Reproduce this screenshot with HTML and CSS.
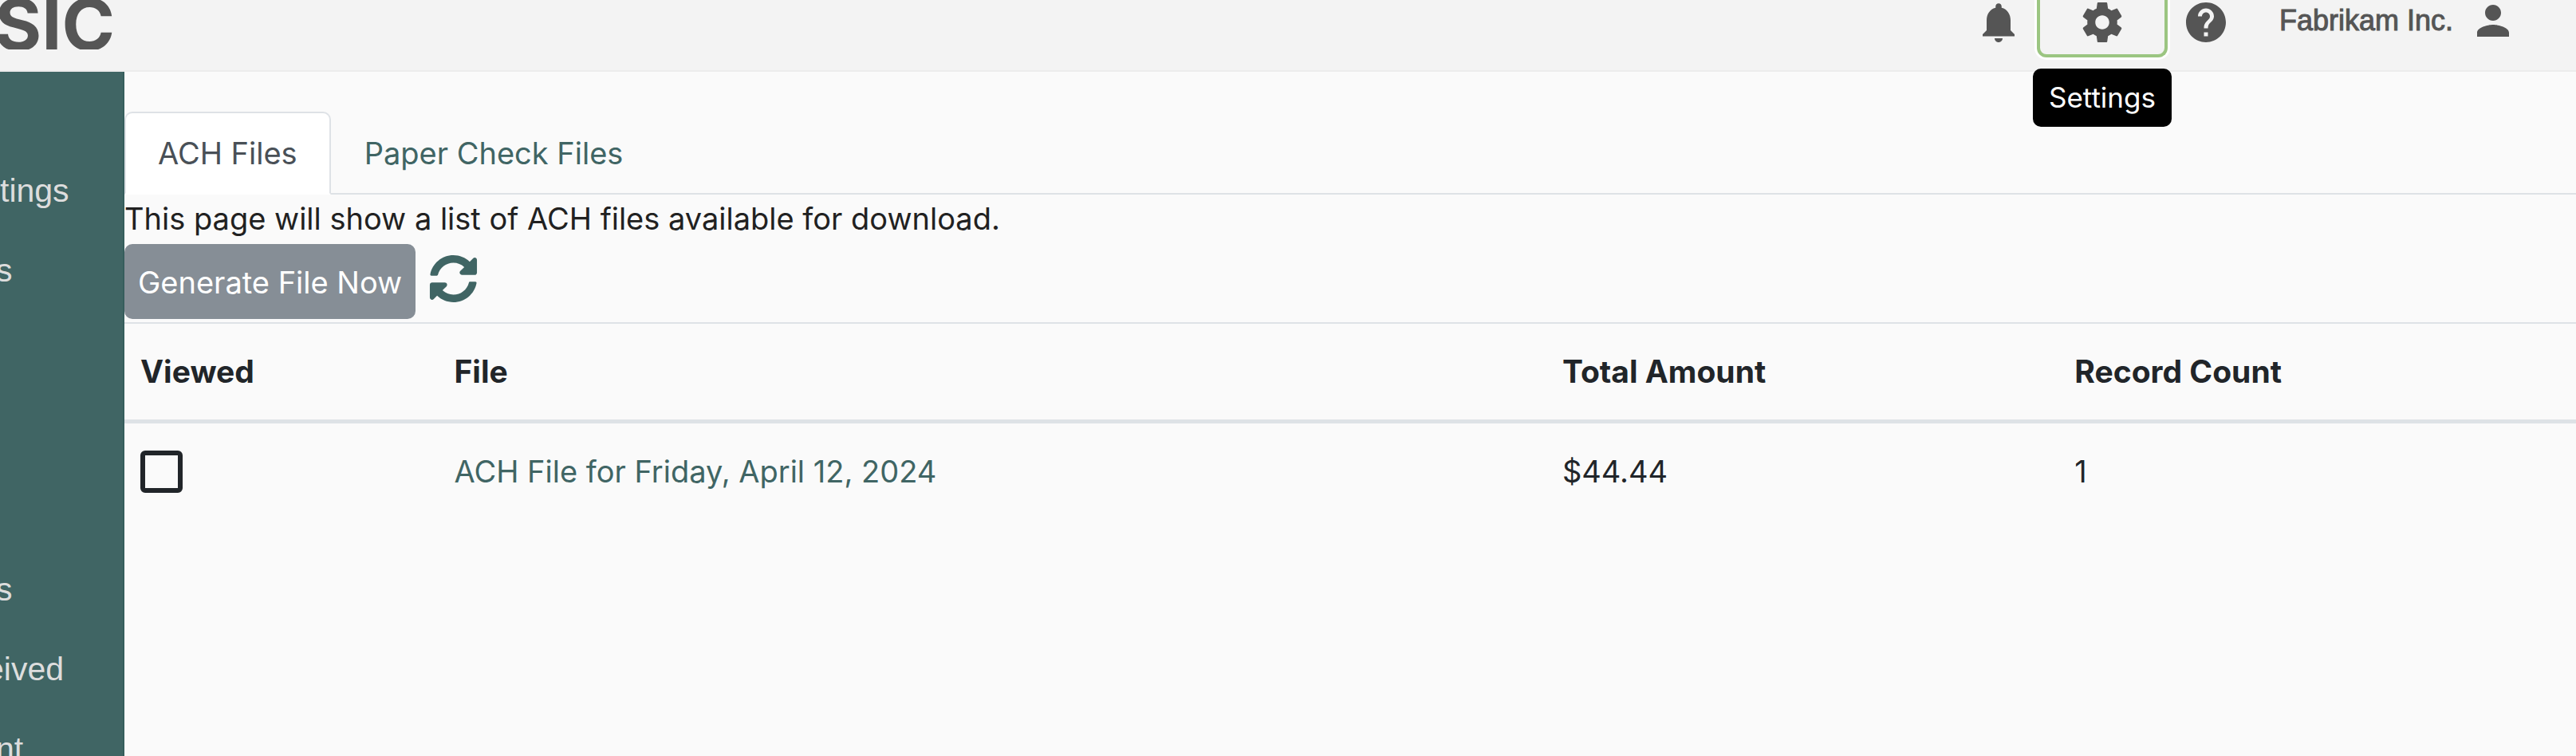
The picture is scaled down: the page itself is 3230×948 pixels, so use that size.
FILE: index.html
```html
<!DOCTYPE html>
<html lang="en">
<head>
<meta charset="utf-8">
<title>ACH Files</title>
<link rel="stylesheet" href="styles.css">
</head>
<body>
<header class="topbar">
  <div class="brand">SIC</div>
  <div class="actions">
    <button class="icon-btn" type="button" aria-label="Notifications">
      <svg class="icon" viewBox="0 0 24 24"><path d="M12 22c1.1 0 2-.9 2-2h-4c0 1.1.89 2 2 2zm6-6v-5c0-3.07-1.64-5.64-4.5-6.32V4c0-.83-.67-1.500-1.500-1.500s-1.500.67-1.500 1.500v.68C7.630 5.360 6 7.920 6 11v5l-2 2v1h16v-1l-2-2z"/></svg>
    </button>
    <div class="tip-host">
      <button class="icon-btn is-focused" type="button" aria-label="Settings" aria-describedby="settings-tip">
        <svg class="icon" viewBox="0 0 24 24"><path d="M19.430 12.980c.04-.32.07-.64.07-.98s-.03-.66-.07-.98l2.110-1.650c.19-.15.24-.42.12-.64l-2-3.460c-.12-.22-.39-.3-.61-.22l-2.490 1c-.52-.4-1.080-.73-1.690-.98l-.38-2.650C14.460 2.180 14.250 2 14 2h-4c-.25 0-.46.18-.49.42l-.38 2.650c-.61.25-1.170.59-1.690.98l-2.490-1c-.23-.09-.49 0-.61.22l-2 3.460c-.13.22-.07.49.12.64l2.110 1.650c-.04.32-.07.65-.07.98s.03.66.07.98l-2.110 1.650c-.19.15-.24.42-.12.64l2 3.460c.12.22.39.3.61.22l2.490-1c.52.4 1.080.73 1.690.98l.38 2.650c.03.24.24.42.49.42h4c.25 0 .46-.18.49-.42l.38-2.650c.61-.25 1.170-.59 1.690-.98l2.490 1c.23.09.49 0 .61-.22l2-3.460c.12-.22.07-.49-.12-.64l-2.110-1.650zM12 15.500c-1.930 0-3.500-1.570-3.500-3.500s1.570-3.500 3.500-3.500 3.500 1.570 3.500 3.500-1.570 3.500-3.500 3.500z"/></svg>
      </button>
      <span class="tooltip" role="tooltip" id="settings-tip">Settings</span>
    </div>
    <button class="icon-btn" type="button" aria-label="Help">
      <svg class="icon" viewBox="0 0 24 24"><path d="M12 2C6.480 2 2 6.480 2 12s4.480 10 10 10 10-4.480 10-10S17.520 2 12 2zm1 17h-2v-2h2v2zm2.070-7.750l-.9.92C13.450 12.900 13 13.500 13 15h-2v-.5c0-1.100.45-2.100 1.170-2.830l1.240-1.260c.37-.36.59-.86.59-1.410 0-1.100-.9-2-2-2s-2 .9-2 2H8c0-2.210 1.790-4 4-4s4 1.790 4 4c0 .88-.36 1.680-.93 2.250z"/></svg>
    </button>
    <button class="account" type="button">
      <span>Fabrikam Inc.</span>
      <svg class="icon" viewBox="0 0 24 24"><path d="M12 12c2.210 0 4-1.790 4-4s-1.790-4-4-4-4 1.790-4 4 1.790 4 4 4zm0 2c-2.670 0-8 1.340-8 4v2h16v-2c0-2.660-5.330-4-8-4z"/></svg>
    </button>
  </div>
</header>
<div class="shell">
  <nav class="sidebar" aria-label="Main">
    <a class="side-link" href="#">tings</a>
    <a class="side-link cut-s" href="#">s</a>
    <div class="side-gap"></div>
    <a class="side-link cut-s" href="#">s</a>
    <a class="side-link cut-l" href="#">eived</a>
    <a class="side-link cut-s" href="#">nt</a>
  </nav>
  <main class="content">
    <div class="tabs" role="tablist">
      <button class="tab is-active" role="tab" aria-selected="true" type="button">ACH Files</button>
      <button class="tab" role="tab" aria-selected="false" type="button">Paper Check Files</button>
    </div>
    <p class="intro">This page will show a list of ACH files available for download.</p>
    <div class="toolbar">
      <button class="generate" type="button">Generate File Now</button>
      <button class="refresh" type="button" aria-label="Refresh">
        <svg class="icon-sync" viewBox="0 0 512 512"><path d="M370.720 133.280C339.458 104.008 298.888 87.962 255.848 88c-77.458.068-144.328 53.178-162.791 126.850-1.344 5.363-6.122 9.150-11.651 9.150H24.103c-7.498 0-13.194-6.807-11.807-14.176C33.933 94.924 134.813 8 256 8c66.448 0 126.791 26.136 171.315 68.685L463.030 40.970C478.149 25.851 504 36.559 504 57.941V192c0 13.255-10.745 24-24 24H345.941c-21.382 0-32.090-25.851-16.971-40.971l41.750-41.749zM32 296h134.059c21.382 0 32.090 25.851 16.971 40.971l-41.750 41.750c31.262 29.273 71.835 45.319 114.876 45.280 77.418-.07 144.315-53.144 162.787-126.849 1.344-5.363 6.122-9.150 11.651-9.150h57.304c7.498 0 13.194 6.807 11.807 14.176C478.067 417.076 377.187 504 256 504c-66.448 0-126.791-26.136-171.315-68.685L48.970 471.030C33.851 486.149 8 475.441 8 454.059V320c0-13.255 10.745-24 24-24z"/></svg>
      </button>
    </div>
    <table class="files">
      <colgroup><col class="c-viewed"><col class="c-file"><col class="c-total"><col></colgroup>
      <thead>
        <tr><th scope="col">Viewed</th><th scope="col">File</th><th scope="col">Total Amount</th><th scope="col">Record Count</th></tr>
      </thead>
      <tbody>
        <tr>
          <td><input class="check" type="checkbox" aria-label="Viewed"></td>
          <td><a class="file-link" href="#">ACH File for Friday, April 12, 2024</a></td>
          <td>$44.44</td>
          <td>1</td>
        </tr>
      </tbody>
    </table>
  </main>
</div>
</body>
</html>
```
FILE: styles.css
```css
* { box-sizing: border-box; }

body {
  margin: 0;
  height: 100vh;
  display: flex;
  flex-direction: column;
  background: #fafafa;
  color: #212529;
  font: 38px/60px Inter, sans-serif;
  overflow: hidden;
}

button {
  margin: 0;
  padding: 0;
  border: 0;
  background: none;
  font: inherit;
  color: inherit;
}

a { text-decoration: none; }

/* Top bar */
.topbar {
  flex: none;
  height: 90px;
  display: flex;
  justify-content: space-between;
  align-items: flex-start;
  background: #f3f3f3;
  border-bottom: 2px solid #ececec;
  color: #555;
}

.brand {
  width: 144px;
  display: flex;
  justify-content: flex-end;
  overflow: hidden;
  font-size: 90px;
  font-weight: 700;
  line-height: 62px;
}

.actions {
  display: flex;
  align-items: flex-start;
  padding-right: 74px;
}

.icon {
  display: block;
  width: 60px;
  height: 60px;
  fill: #555;
}

.icon-btn {
  display: block;
  margin-top: -2px;
  padding: 0 8px;
}

.tip-host { position: relative; padding: 0 10px; }

.is-focused {
  padding: 0 48px 10px;
  border: 4px solid #9bc581;
  border-top: 0;
  border-radius: 0 0 12px 12px;
  box-shadow: 0 0 0 3px #fff;
}

.tooltip {
  position: absolute;
  top: 86px;
  left: 50%;
  transform: translateX(-50%);
  padding: 0 20px;
  border-radius: 10px;
  background: #000;
  color: #fff;
  font-size: 35px;
  line-height: 73px;
}

.account {
  display: flex;
  align-items: center;
  gap: 20px;
  margin-left: 54px;
  margin-top: -4px;
  font: 36px/60px "Liberation Sans", sans-serif;
  -webkit-text-stroke: 1px #555;
}

.account .icon { stroke: none; }

/* Sidebar and page body */
.shell { flex: 1; min-height: 0; display: flex; }

.sidebar {
  flex: 0 0 156px;
  padding-top: 99px;
  background: #406564;
  border-right: 2px solid #365d5c;
  overflow: hidden;
}

.side-link {
  display: block;
  height: 100px;
  line-height: 100px;
  font-size: 41px;
  font-family: "Liberation Sans", sans-serif;
  color: #ddd;
}

.side-gap { height: 300px; }
.cut-s { text-indent: -5px; }
.cut-l { text-indent: -18px; }

.content {
  flex: 1;
  min-width: 0;
  padding-top: 50px;
}

/* Tabs */
.tabs {
  display: flex;
  border-bottom: 2px solid #dee2e6;
}

.tab {
  margin-bottom: -2px;
  padding: 20px 40px;
  border: 2px solid transparent;
  border-radius: 10px 10px 0 0;
  color: #406564;
}

.tab.is-active {
  background: #fff;
  border-color: #dee2e6;
  border-bottom-color: #fff;
  color: #495057;
}

.intro {
  margin: 0;
  padding-bottom: 2px;
  color: #212121;
}

.toolbar {
  display: flex;
  align-items: flex-start;
  gap: 17px;
  padding-bottom: 4px;
}

.generate {
  padding: 18px 17px 16px;
  border-radius: 10px;
  background: #868e96;
  color: #fff;
}

.refresh { padding-top: 13px; }

.icon-sync {
  display: block;
  width: 61px;
  height: 61px;
  fill: #406564;
}

/* File table */
.files {
  width: 100%;
  table-layout: fixed;
  border-collapse: separate;
  border-spacing: 0;
}

.c-viewed { width: 12.8%; }
.c-file { width: 45.2%; }
.c-total { width: 20.9%; }

.files th,
.files td {
  padding: 30px 20px;
  border-top: 2px solid #dee2e6;
  text-align: left;
  vertical-align: top;
}

.files th {
  border-bottom: 5px solid #dee2e6;
  font-size: 39px;
  font-weight: 700;
}

.files td { border-top: 0; }

.check {
  appearance: none;
  display: block;
  width: 53px;
  height: 53px;
  margin: 4px 0 0;
  border: 6px solid #212529;
  border-radius: 6px;
}

.file-link { color: #406564; }
```
